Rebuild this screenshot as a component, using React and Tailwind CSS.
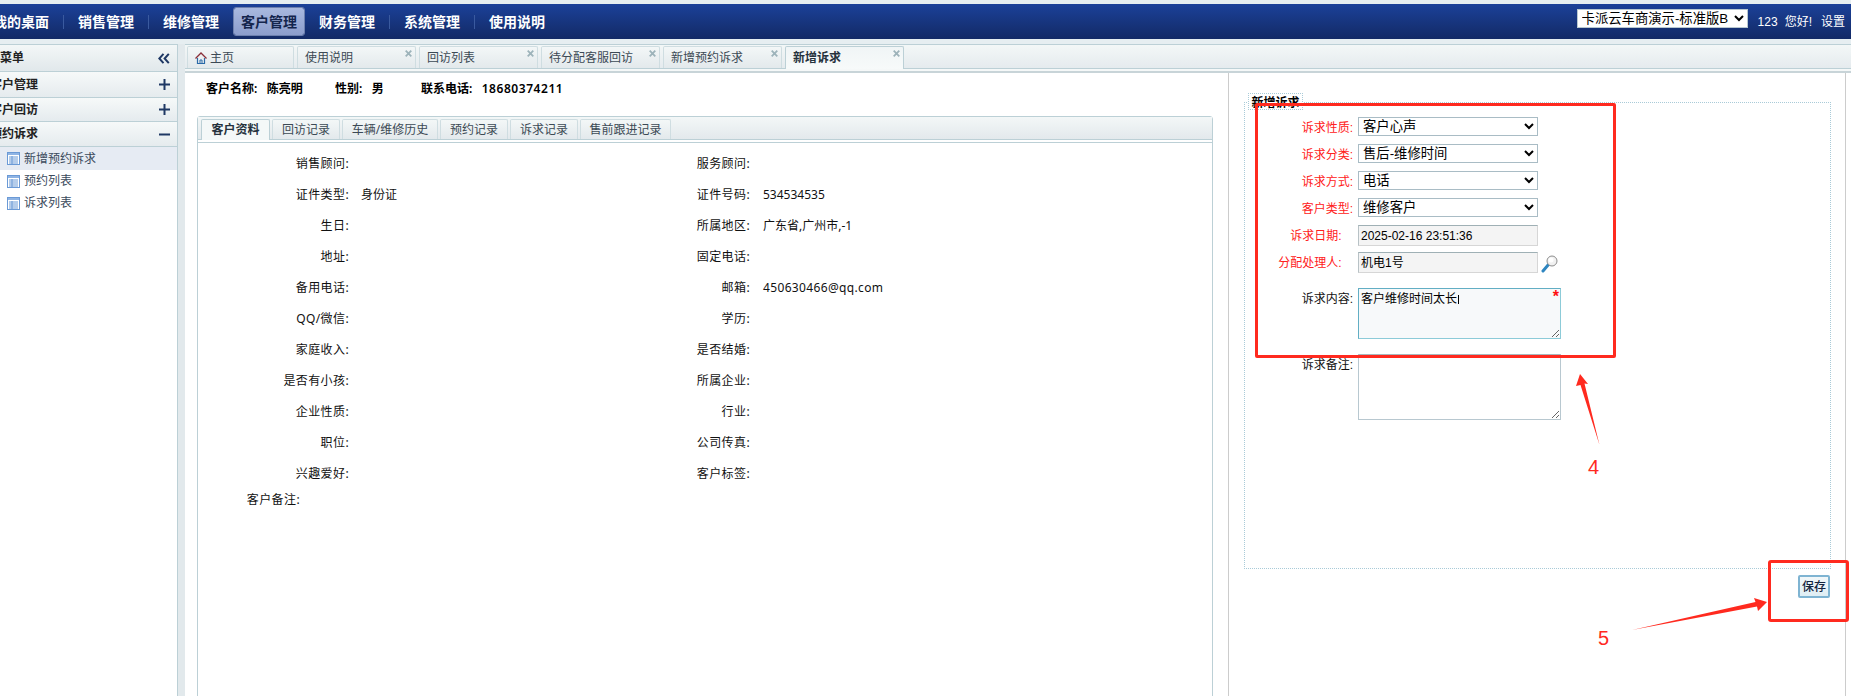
import React from "react";

const navItems = [
  ["我的桌面", false, true],
  ["销售管理", false, true],
  ["维修管理", false, false],
  ["客户管理", true, false],
  ["财务管理", false, true],
  ["系统管理", false, true],
  ["使用说明", false, false],
];

const tabs = ["使用说明", "回访列表", "待分配客服回访", "新增预约诉求", "新增诉求"];
const innerTabs = [
  ["客户资料", "w-[69px]"],
  ["回访记录", "w-[68px]"],
  ["车辆/维修历史", "w-[96px]"],
  ["预约记录", "w-[68px]"],
  ["诉求记录", "w-[68px]"],
  ["售前跟进记录", "w-[91px]"],
];

const rows = [
  ["销售顾问:", "", "服务顾问:", ""],
  ["证件类型:", "身份证", "证件号码:", "534534535"],
  ["生日:", "", "所属地区:", "广东省,广州市,-1"],
  ["地址:", "", "固定电话:", ""],
  ["备用电话:", "", "邮箱:", "450630466@qq.com"],
  ["QQ/微信:", "", "学历:", ""],
  ["家庭收入:", "", "是否结婚:", ""],
  ["是否有小孩:", "", "所属企业:", ""],
  ["企业性质:", "", "行业:", ""],
  ["职位:", "", "公司传真:", ""],
  ["兴趣爱好:", "", "客户标签:", ""],
];

const selects = [
  ["诉求性质:", "客户心声"],
  ["诉求分类:", "售后-维修时间"],
  ["诉求方式:", "电话"],
  ["客户类型:", "维修客户"],
];

function Plus() {
  return (
    <svg width="11" height="11" viewBox="0 0 11 11">
      <path d="M0 5.5h11M5.5 0v11" stroke="#1f3864" strokeWidth="2" fill="none" />
    </svg>
  );
}

function Minus() {
  return (
    <svg width="11" height="11" viewBox="0 0 11 11">
      <path d="M0 5.5h11" stroke="#1f3864" strokeWidth="2" fill="none" />
    </svg>
  );
}

function DoubleLeft() {
  return (
    <svg width="12" height="11" viewBox="0 0 12 11">
      <path d="M5.5 0.8 1.3 5.5l4.2 4.7M10.8 0.8 6.6 5.5l4.2 4.7" stroke="#1f3864" strokeWidth="2" fill="none" />
    </svg>
  );
}

function TableIcon() {
  return (
    <svg width="13" height="13" viewBox="0 0 13 13" className="shrink-0">
      <rect x="0.5" y="0.5" width="12" height="12" fill="#fff" stroke="#6b9ad6" />
      <rect x="1" y="1" width="11" height="2" fill="#8fb4e4" />
      <path d="M2 5h9M2 7h9M2 9h9M2 11h9M5 4v8" stroke="#6b9ad6" strokeWidth="1" fill="none" />
    </svg>
  );
}

function HomeIcon() {
  return (
    <svg width="12" height="12" viewBox="0 0 12 12" className="shrink-0">
      <path d="M2.5 6v5.5h7V6" stroke="#2a6aa8" strokeWidth="1.2" fill="none" />
      <path d="M5 11.5V8h2v3.5" stroke="#2a6aa8" strokeWidth="1" fill="none" />
      <path d="M0.5 6.5 6 1l5.5 5.5" stroke="#8a2f3a" strokeWidth="1.3" fill="none" />
    </svg>
  );
}

function CloseIcon() {
  return (
    <svg width="7" height="7" viewBox="0 0 7 7" className="absolute right-[3px] top-[3px]">
      <path d="M0.7 0.7l5.6 5.6M6.3 0.7 0.7 6.3" stroke="#9db3ba" strokeWidth="1.8" fill="none" />
    </svg>
  );
}

function SearchIcon() {
  return (
    <svg width="17" height="18" viewBox="0 0 17 18" className="shrink-0">
      <path d="M7.5 9.5 2 16" stroke="#2f86c0" strokeWidth="3" strokeLinecap="round" fill="none" />
      <circle cx="11" cy="6" r="5" fill="#f1f1f1" stroke="#8d8d8d" strokeWidth="1" />
      <circle cx="10" cy="5" r="2.5" fill="#ffffff" />
    </svg>
  );
}

export default function App() {
  return (
    <div className="relative w-[1851px] h-[696px] overflow-hidden bg-white text-[12px] leading-[16px] text-[#111] font-['Noto_Sans','Noto_Sans_CJK_SC',sans-serif]">
      {/* Top bar */}
      <div className="h-[4px] bg-[#e6eef1]" />
      <header className="h-[35px] flex items-center bg-gradient-to-b from-[#1b4199] to-[#132a66]">
        <nav className="flex items-center ml-[-14px]">
          {navItems.map(([label, active, sep], i) => (
            <React.Fragment key={label}>
              <div
                className={
                  active
                    ? "h-[27px] px-[7px] flex items-center rounded-[2px] border-0 outline outline-1 outline-[#6d80ae] bg-gradient-to-b from-[#a9b9df] to-[#8c9dcc] text-[14px] font-bold text-[#14254d]"
                    : "h-[27px] px-[7px] flex items-center text-[14px] font-bold text-white"
                }
              >
                {label}
              </div>
              {i < navItems.length - 1 &&
                (sep ? (
                  <div className="w-px h-[14px] mx-[7px] bg-[#3a5a9f]" />
                ) : (
                  <div className="w-[8px]" />
                ))}
            </React.Fragment>
          ))}
        </nav>
        <div className="ml-auto flex items-center h-full font-['Liberation_Sans','Noto_Sans_CJK_SC',sans-serif]">
          <select
            defaultValue="a"
            className="w-[171px] h-[19px] mt-[-7px] bg-white text-black text-[13.33px] leading-[16px] border border-[#b8c8d0]"
          >
            <option value="a">卡派云车商演示-标准版B</option>
          </select>
          <span className="ml-[10px] text-white">123</span>
          <span className="ml-[7px] text-white">您好!</span>
          <span className="ml-[9px] mr-[6px] text-white">设置</span>
        </div>
      </header>

      {/* Body */}
      <div className="flex h-[657px] bg-[#e6eef1] pt-[5px]">
        {/* Sidebar */}
        <aside className="w-[188px] ml-[-10px] shrink-0 flex flex-col bg-white border-r border-[#bcd0d6] border-t">
          <div className="h-[27px] shrink-0 flex items-center justify-between pr-[7px] border-b border-[#bcd0d6] bg-gradient-to-b from-[#f3f7f7] to-[#e1e8eb]">
            <span className="ml-[-14px] font-bold text-[#222]">功能菜单</span>
            <DoubleLeft />
          </div>
          <div className="h-[26px] shrink-0 flex items-center justify-between pr-[7px] border-b border-[#bcd0d6] bg-gradient-to-b from-[#f6f9f9] to-[#e5ebee]">
            <span className="font-bold text-[#222]">客户管理</span>
            <Plus />
          </div>
          <div className="h-[24px] shrink-0 flex items-center justify-between pr-[7px] border-b border-[#bcd0d6] bg-gradient-to-b from-[#f6f9f9] to-[#e5ebee]">
            <span className="font-bold text-[#222]">客户回访</span>
            <Plus />
          </div>
          <div className="h-[25px] shrink-0 flex items-center justify-between pr-[7px] border-b border-[#bcd0d6] bg-gradient-to-b from-[#f6f9f9] to-[#e5ebee]">
            <span className="font-bold text-[#222]">预约诉求</span>
            <Minus />
          </div>
          <div className="h-[23px] shrink-0 flex items-center pl-[17px] gap-[4px] bg-[#e6ebf3] text-[#3b4a5c]">
            <TableIcon />
            <span>新增预约诉求</span>
          </div>
          <div className="h-[22px] shrink-0 flex items-center pl-[17px] gap-[4px] text-[#3b4a5c]">
            <TableIcon />
            <span>预约列表</span>
          </div>
          <div className="h-[22px] shrink-0 flex items-center pl-[17px] gap-[4px] text-[#3b4a5c]">
            <TableIcon />
            <span>诉求列表</span>
          </div>
        </aside>

        {/* Splitter */}
        <div className="w-[7px] shrink-0 bg-[#e2e9ec]" />

        {/* Main */}
        <main className="flex-1 min-w-0 flex flex-col bg-white">
          {/* Tab strip */}
          <div className="h-[25px] shrink-0 flex items-end pl-[2px] gap-[3px] border-t border-b border-[#bcd0d6] bg-gradient-to-b from-[#f3f7f7] to-[#e5ebee]">
            <div className="w-[107px] h-[22px] flex items-center gap-[3px] pl-[7px] border border-b-0 border-[#cfdde1] rounded-t-[2px] bg-gradient-to-b from-[#f3f7f7] to-[#e3e9ec] text-[#3c4a55]">
              <HomeIcon />
              <span>主页</span>
            </div>
            {tabs.map((t, i) => {
              const active = i === tabs.length - 1;
              return (
                <div
                  key={t}
                  className={
                    active
                      ? "relative w-[119px] h-[23px] mb-[-1px] flex items-center pl-[7px] border border-b-0 border-[#bcd0d6] rounded-t-[2px] bg-gradient-to-b from-[#f0f5f6] to-[#f7fafa] font-bold text-[#26323d]"
                      : "relative w-[119px] h-[22px] flex items-center pl-[7px] border border-b-0 border-[#cfdde1] rounded-t-[2px] bg-gradient-to-b from-[#f3f7f7] to-[#e3e9ec] text-[#3c4a55]"
                  }
                >
                  {t}
                  <CloseIcon />
                </div>
              );
            })}
          </div>
          <div className="h-[2px] shrink-0 bg-[#f5f8f8]" />
          <div className="h-[2px] shrink-0 bg-[#c8d4d8]" />

          {/* Content */}
          <div className="flex-1 min-h-0 flex mr-[5px] border-r border-[#cccccc]">
            {/* Left content */}
            <div className="w-[1043px] shrink-0 pl-[12px]">
              <div className="h-[43px] flex items-start pt-[8px] font-semibold text-black">
                <span className="ml-[9px] w-[129px]">客户名称:&nbsp;&nbsp;&nbsp;陈亮明</span>
                <span className="w-[86px]">性别:&nbsp;&nbsp;&nbsp;男</span>
                <span>
                  联系电话:&nbsp;&nbsp;&nbsp;<span className="tracking-[0.55px]">18680374211</span>
                </span>
              </div>

              <div className="w-[1016px] h-[600px] border border-[#bcd0d6] rounded-t-[3px]">
                <div className="h-[23px] flex items-end pl-[3px] gap-[2px] border-b border-[#bcd0d6] bg-gradient-to-b from-[#f3f7f7] to-[#e3e9ec]">
                  {innerTabs.map(([t, w], i) => (
                    <div
                      key={t}
                      className={
                        i === 0
                          ? `${w} h-[21px] mb-[-1px] flex items-center justify-center border border-b-0 border-[#bcd0d6] rounded-t-[2px] bg-[#f4f8f8] font-semibold text-[#26323d]`
                          : `${w} h-[20px] flex items-center justify-center border border-b-0 border-[#cfdde1] rounded-t-[2px] bg-gradient-to-b from-[#f3f7f7] to-[#e3e9ec] text-[#3c4a55]`
                      }
                    >
                      {t}
                    </div>
                  ))}
                </div>
                <div className="h-[3px] border-b border-[#bcd0d6] bg-white" />
                <div className="pt-[5px]">
                  {rows.map((r) => (
                    <div key={r[0]} className="h-[31px] flex items-center">
                      <div className="w-[401px] flex">
                        <span className="w-[151px] text-right tracking-[0.4px]">{r[0]}</span>
                        <span className="ml-[12px]">{r[1]}</span>
                      </div>
                      <div className="flex">
                        <span className="w-[151px] text-right tracking-[0.4px]">{r[2]}</span>
                        <span className={r[3].includes("@") ? "ml-[13px] tracking-[0.35px]" : "ml-[13px]"}>{r[3]}</span>
                      </div>
                    </div>
                  ))}
                  <div className="mt-[1px] h-[20px] flex items-center">
                    <span className="w-[102px] text-right tracking-[0.4px]">客户备注:</span>
                  </div>
                </div>
              </div>
            </div>

            {/* Right form */}
            <div className="flex-1 min-w-0 pl-[15px] pt-[29px] border-l border-[#cccccc]">
              <div className="relative w-[587px] h-[467px] border border-dotted border-[#a9cbd8]">
                <div className="w-[55px] h-[17px] ml-[3px] mt-[-10px] flex items-center justify-center bg-white border border-dotted border-[#a9cbd8] font-bold text-black">
                  <span className="pt-[3px]">新增诉求</span>
                </div>
                <div className="mt-[7px] font-['Liberation_Sans','Noto_Sans_CJK_SC',sans-serif]">
                  {selects.map(([label, value]) => (
                    <div key={label} className="h-[19px] mb-[8px] flex items-center">
                      <label className="w-[108px] text-right text-[#ff2020] pt-[3px]">{label}</label>
                      <select
                        defaultValue={value}
                        className="ml-[5px] w-[180px] h-[19px] bg-white text-black text-[13.33px] leading-[16px] border border-[#a9bcc5]"
                      >
                        <option value={value}>{value}</option>
                      </select>
                    </div>
                  ))}
                  <div className="h-[21px] flex items-center">
                    <label className="w-[100px] text-right text-[#ff2020] pt-[1px]">诉求日期:&nbsp;</label>
                    <div className="ml-[13px] w-[180px] h-[21px] flex items-center pl-[2px] border border-[#d6d6d6] border-t-[#9fb0b5] border-l-[#b8c2c6] bg-[#f4f4f4] text-black">
                      2025-02-16 23:51:36
                    </div>
                  </div>
                  <div className="h-[21px] mt-[6px] flex items-center">
                    <label className="w-[100px] text-right text-[#ff2020]">分配处理人:&nbsp;</label>
                    <div className="ml-[13px] w-[180px] h-[21px] flex items-center pl-[2px] border border-[#d6d6d6] border-t-[#9fb0b5] border-l-[#b8c2c6] bg-[#f4f4f4] text-black">
                      机电1号
                    </div>
                    <span className="ml-[3px] mt-[2px]">
                      <SearchIcon />
                    </span>
                  </div>
                  <div className="mt-[15px] flex items-start">
                    <label className="w-[108px] text-right pt-[3px]">诉求内容:</label>
                    <div className="relative ml-[5px]">
                      <textarea
                        defaultValue="客户维修时间太长"
                        className="block w-[203px] h-[51px] p-[2px] leading-[16px] text-black border border-[#8ccbd8] border-t-[#62aec4] border-l-[#62aec4] bg-[#f7f9fa] outline-none"
                      />
                      <span className="absolute right-[2px] top-[1px] text-[16px] leading-[16px] font-bold text-[#ff1010]">*</span>
                      <span className="absolute left-[100px] top-[7px] w-px h-[9px] bg-black" />
                    </div>
                  </div>
                  <div className="mt-[15px] flex items-start">
                    <label className="w-[108px] text-right pt-[3px]">诉求备注:</label>
                    <textarea
                      defaultValue=""
                      className="block ml-[5px] w-[203px] h-[66px] p-[2px] leading-[16px] text-black border border-[#b8c8d0] border-t-[#a8b8bd] bg-white outline-none"
                    />
                  </div>
                </div>
              </div>
              <div className="w-[587px] flex justify-end pt-[6px] pr-[1px]">
                <button className="w-[32px] h-[23px] rounded-[2px] border-2 border-[#7fb4d2] bg-gradient-to-b from-[#f2f7f9] to-[#dfeef4] text-[12px] leading-[14px] font-medium text-[#14253f]">
                  保存
                </button>
              </div>
            </div>
          </div>
        </main>
      </div>

      {/* Red annotations drawn over the page */}
      <div className="absolute left-[1255px] top-[103px] w-[361px] h-[255px] border-[3px] border-[#ff2a1f] rounded-[2px] pointer-events-none" />
      <div className="absolute left-[1768px] top-[560px] w-[81px] h-[62px] border-[3px] border-[#ff2a1f] rounded-[3px] pointer-events-none" />
      <svg className="absolute left-0 top-0 pointer-events-none" width="1851" height="696" viewBox="0 0 1851 696">
        <polygon points="1580,374 1588,384 1584.5,383.5 1599.5,445 1580.5,385 1576,386" fill="#ff2a1f" />
        <polygon points="1767,602 1758,611 1757,606.5 1632,630 1755.5,602 1754,598" fill="#ff2a1f" />
      </svg>
      <span className="absolute left-[1588px] top-[455px] text-[20px] leading-[24px] text-[#ff2a1f] font-['Liberation_Sans',sans-serif]">4</span>
      <span className="absolute left-[1598px] top-[626px] text-[20px] leading-[24px] text-[#ff2a1f] font-['Liberation_Sans',sans-serif]">5</span>
    </div>
  );
}
